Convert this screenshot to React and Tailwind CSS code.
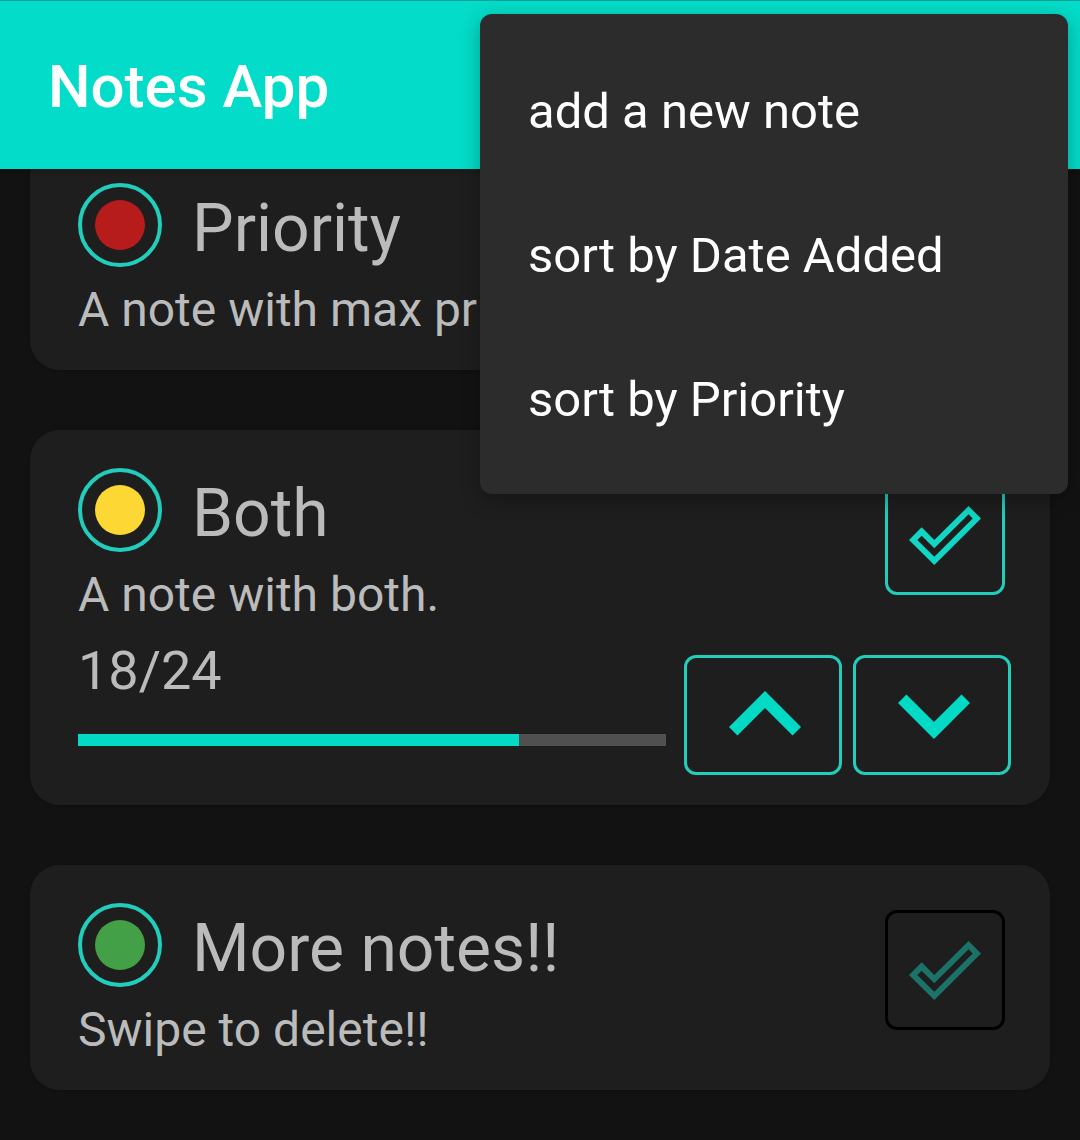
const notes = [
  { title: 'Priority', text: 'A note with max priority.', color: 'bg-[#b71c1c]', done: false },
  { title: 'Both', text: 'A note with both.', color: 'bg-[#fdd835]', done: true, count: 18, total: 24 },
  { title: 'More notes!!', text: 'Swipe to delete!!', color: 'bg-[#43a047]', done: false },
];

const menuItems = ['add a new note', 'sort by Date Added', 'sort by Priority'];

function CheckIcon({ className }) {
  return (
    <svg viewBox="0 0 72 59" className={className} fill="currentColor" fillRule="evenodd" aria-hidden="true">
      <path d="M0 34 12.7 21.3 25.3 34 59.6 0 72 12.5 25.3 59ZM8.3 34 25.3 50.7 63.7 12.5 59.6 8.3 25.3 42.3 12.7 29.8Z" />
    </svg>
  );
}

function ChevronUp({ className }) {
  return (
    <svg viewBox="4 4 16 16" className={className} fill="currentColor" aria-hidden="true">
      <path d="M12 8l-6 6 1.41 1.41L12 10.83l4.59 4.58L18 14z" />
    </svg>
  );
}

function StepButton({ label, children }) {
  return (
    <button
      type="button"
      aria-label={label}
      className="mt-[25px] flex h-[120px] w-[158px] shrink-0 items-center justify-center rounded-xl border-3 border-[#22cdbb] pl-1 text-[#03dac5]"
    >
      {children}
    </button>
  );
}

function NoteCard({ note }) {
  const hasCount = note.total !== undefined;
  return (
    <article className={`rounded-[30px] bg-[#1e1e1e] pl-12 shadow-sm ${hasCount ? 'pb-[30px]' : 'pb-[25px]'}`}>
      <div className="flex items-start justify-between pr-[45px]">
        <div className="min-w-0 pt-[38px]">
          <div className="flex gap-[30px]">
            <span className="flex size-[84px] shrink-0 items-center justify-center rounded-full border-4 border-[#22cdbb]">
              <span className={`size-[50px] rounded-full ${note.color}`} />
            </span>
            <h2 className="text-[66px] leading-[92px]">{note.title}</h2>
          </div>
          <p className="text-5xl leading-[70px]">{note.text}</p>
        </div>
        <button
          type="button"
          aria-label="Mark as done"
          disabled={!note.done}
          className={`mt-[45px] flex size-[120px] shrink-0 items-center justify-center rounded-xl border-3 ${
            note.done ? 'border-[#22cdbb] text-[#10d6c3]' : 'border-black text-[#1b7268]'
          }`}
        >
          <CheckIcon className="w-[72px]" />
        </button>
      </div>
      {hasCount && (
        <div className="flex items-start gap-[11px] pr-[39px]">
          <div className="mr-[7px] flex-1">
            <p className="text-[54px] leading-[82px]">
              {note.count}/{note.total}
            </p>
            <div
              role="progressbar"
              aria-label="Progress"
              aria-valuenow={note.count}
              aria-valuemax={note.total}
              className="mt-[22px] h-3 bg-[#505050]"
            >
              <div className="h-full bg-[#03dac5]" style={{ width: `${(note.count / note.total) * 100}%` }} />
            </div>
          </div>
          <StepButton label="Increase">
            <ChevronUp className="size-24" />
          </StepButton>
          <StepButton label="Decrease">
            <ChevronUp className="size-24 rotate-180" />
          </StepButton>
        </div>
      )}
    </article>
  );
}

export default function App() {
  return (
    <div className="relative min-h-screen bg-[#121212] font-['Roboto',sans-serif] text-[#bbbbbb]">
      <header className="relative z-10 flex h-[169px] items-center border-t border-[#0a9f9a] bg-[#03dcc8] px-12 pt-1 shadow-md">
        <h1 className="text-6xl font-medium text-white">Notes App</h1>
      </header>
      <main className="-mt-6 flex flex-col gap-[60px] px-[30px]">
        {notes.map((note) => (
          <NoteCard key={note.title} note={note} />
        ))}
      </main>
      <div
        role="menu"
        className="absolute top-[14px] right-3 z-20 flex w-[588px] flex-col rounded-xl bg-[#2c2c2c] pt-[26px] pb-[22px] shadow-[0_6px_20px_rgba(0,0,0,0.3)]"
      >
        {menuItems.map((item) => (
          <button key={item} type="button" role="menuitem" className="h-36 px-12 text-left text-[49px] text-white">
            {item}
          </button>
        ))}
      </div>
    </div>
  );
}
